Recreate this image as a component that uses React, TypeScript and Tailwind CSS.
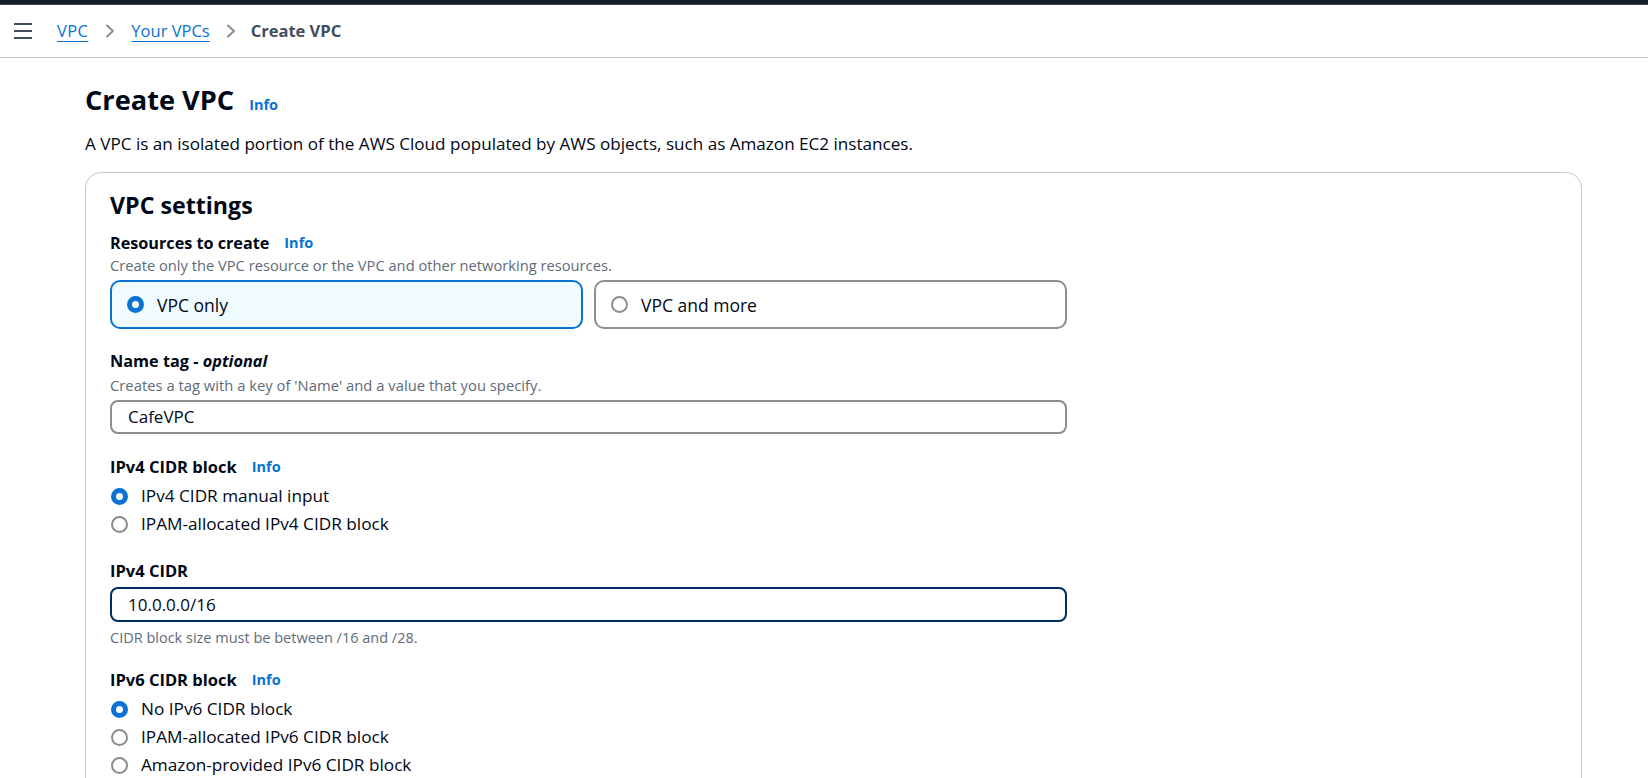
import React from "react";

const Info = () => (
  <span className="text-[14.5px] font-bold text-[#0972d3] leading-[22px] cursor-pointer">Info</span>
);

const Radio = ({ checked }: { checked: boolean }) =>
  checked ? (
    <span className="block w-[17px] h-[17px] shrink-0 rounded-full border-[5.5px] border-[#0972d3] bg-white" />
  ) : (
    <span className="block w-[17px] h-[17px] shrink-0 rounded-full border-2 border-[#8c8c94] bg-white" />
  );

const RadioRow = ({ checked, label }: { checked: boolean; label: string }) => (
  <div className="flex items-center gap-[13px] h-[24px] pl-[1px]">
    <Radio checked={checked} />
    <span className="text-[17.2px] leading-[24px] text-[#000716]">{label}</span>
  </div>
);

const Chevron = () => (
  <svg width="10" height="14" viewBox="0 0 10 14" className="shrink-0">
    <polyline points="2,1.5 8,7 2,12.5" fill="none" stroke="#8c8c94" strokeWidth="2" strokeLinecap="round" strokeLinejoin="round" />
  </svg>
);

export default function App() {
  return (
    <div className="min-h-screen bg-white text-[#000716] font-['Open_Sans',sans-serif] overflow-hidden">
      <div className="h-[5px] bg-[#161d26] border-b border-[#3a4350]" />
      <div className="h-[53px] border-b border-[#c6c6cd] flex items-center">
        <div className="ml-[14px] w-[18px] flex flex-col gap-[4.5px]">
          <span className="block h-[2.5px] bg-[#414d5c]" />
          <span className="block h-[2.5px] bg-[#414d5c]" />
          <span className="block h-[2.5px] bg-[#414d5c]" />
        </div>
        <nav className="ml-[25px] flex items-center text-[16.5px] leading-[24px]">
          <span className="text-[#0972d3] underline underline-offset-[4px] decoration-1 tracking-[0.4px]">VPC</span>
          <span className="ml-[17px] mr-[16px] flex items-center"><Chevron /></span>
          <span className="text-[#0972d3] underline underline-offset-[4px] decoration-1">Your VPCs</span>
          <span className="ml-[16px] mr-[15px] flex items-center"><Chevron /></span>
          <span className="font-bold text-[#414d5c]">Create VPC</span>
        </nav>
      </div>

      <main className="pl-[85px] pr-[66px]">
        <div className="pt-[24px] flex items-baseline gap-[15px]">
          <h1 className="text-[27.2px] leading-[36px] font-bold text-[#000716]">Create VPC</h1>
          <Info />
        </div>
        <p className="mt-[14px] text-[17.1px] leading-[24px] text-[#000716]">
          A VPC is an isolated portion of the AWS Cloud populated by AWS objects, such as Amazon EC2 instances.
        </p>

        <section className="mt-[16px] border border-[#c6c6cd] rounded-[16px] pl-[24px] pt-[17px] pb-[60px]">
          <h2 className="text-[23.2px] leading-[30px] font-bold">VPC settings</h2>

          <div className="w-[957px]">
            {/* Resources to create */}
            <div className="mt-[12px] flex items-center gap-[15px]">
              <span className="text-[16.2px] leading-[22px] font-bold">Resources to create</span>
              <Info />
            </div>
            <p className="mt-[1px] text-[14.7px] leading-[20px] text-[#5f6b7a]">
              Create only the VPC resource or the VPC and other networking resources.
            </p>
            <div className="mt-[5px] flex gap-[11px]">
              <div className="flex-1 h-[49px] rounded-[10px] border-2 border-[#0972d3] bg-[#f0fbff] flex items-center pl-[15px] gap-[13px]">
                <Radio checked />
                <span className="text-[17.5px] leading-[24px]">VPC only</span>
              </div>
              <div className="flex-1 h-[49px] rounded-[10px] border-2 border-[#8c8c94] bg-white flex items-center pl-[15px] gap-[13px]">
                <Radio checked={false} />
                <span className="text-[17.5px] leading-[24px]">VPC and more</span>
              </div>
            </div>

            {/* Name tag */}
            <div className="mt-[21px] text-[16.3px] leading-[22px] font-bold">
              Name tag - <i>optional</i>
            </div>
            <p className="mt-[3px] text-[14.8px] leading-[20px] text-[#5f6b7a]">
              Creates a tag with a key of 'Name' and a value that you specify.
            </p>
            <div className="mt-[5px] h-[34px] rounded-[8px] border-2 border-[#8c8c94] flex items-center pl-[16px] text-[17px]">
              CafeVPC
            </div>

            {/* IPv4 CIDR block */}
            <div className="mt-[22px] flex items-center gap-[15px]">
              <span className="text-[16.5px] leading-[22px] font-bold">IPv4 CIDR block</span>
              <Info />
            </div>
            <div className="mt-[6px] flex flex-col gap-[4px]">
              <RadioRow checked label="IPv4 CIDR manual input" />
              <RadioRow checked={false} label="IPAM-allocated IPv4 CIDR block" />
            </div>

            {/* IPv4 CIDR */}
            <div className="mt-[24px] text-[16.5px] leading-[22px] font-bold">IPv4 CIDR</div>
            <div className="mt-[5px] h-[35px] rounded-[8px] border-2 border-[#002b66] flex items-center pl-[16px] text-[17px]">
              10.0.0.0/16
            </div>
            <p className="mt-[6px] text-[14.5px] leading-[20px] text-[#5f6b7a]">
              CIDR block size must be between /16 and /28.
            </p>

            {/* IPv6 CIDR block */}
            <div className="mt-[21px] flex items-center gap-[15px]">
              <span className="text-[16.5px] leading-[22px] font-bold">IPv6 CIDR block</span>
              <Info />
            </div>
            <div className="mt-[6px] flex flex-col gap-[4px]">
              <RadioRow checked label="No IPv6 CIDR block" />
              <RadioRow checked={false} label="IPAM-allocated IPv6 CIDR block" />
              <RadioRow checked={false} label="Amazon-provided IPv6 CIDR block" />
            </div>
          </div>
        </section>
      </main>
    </div>
  );
}
